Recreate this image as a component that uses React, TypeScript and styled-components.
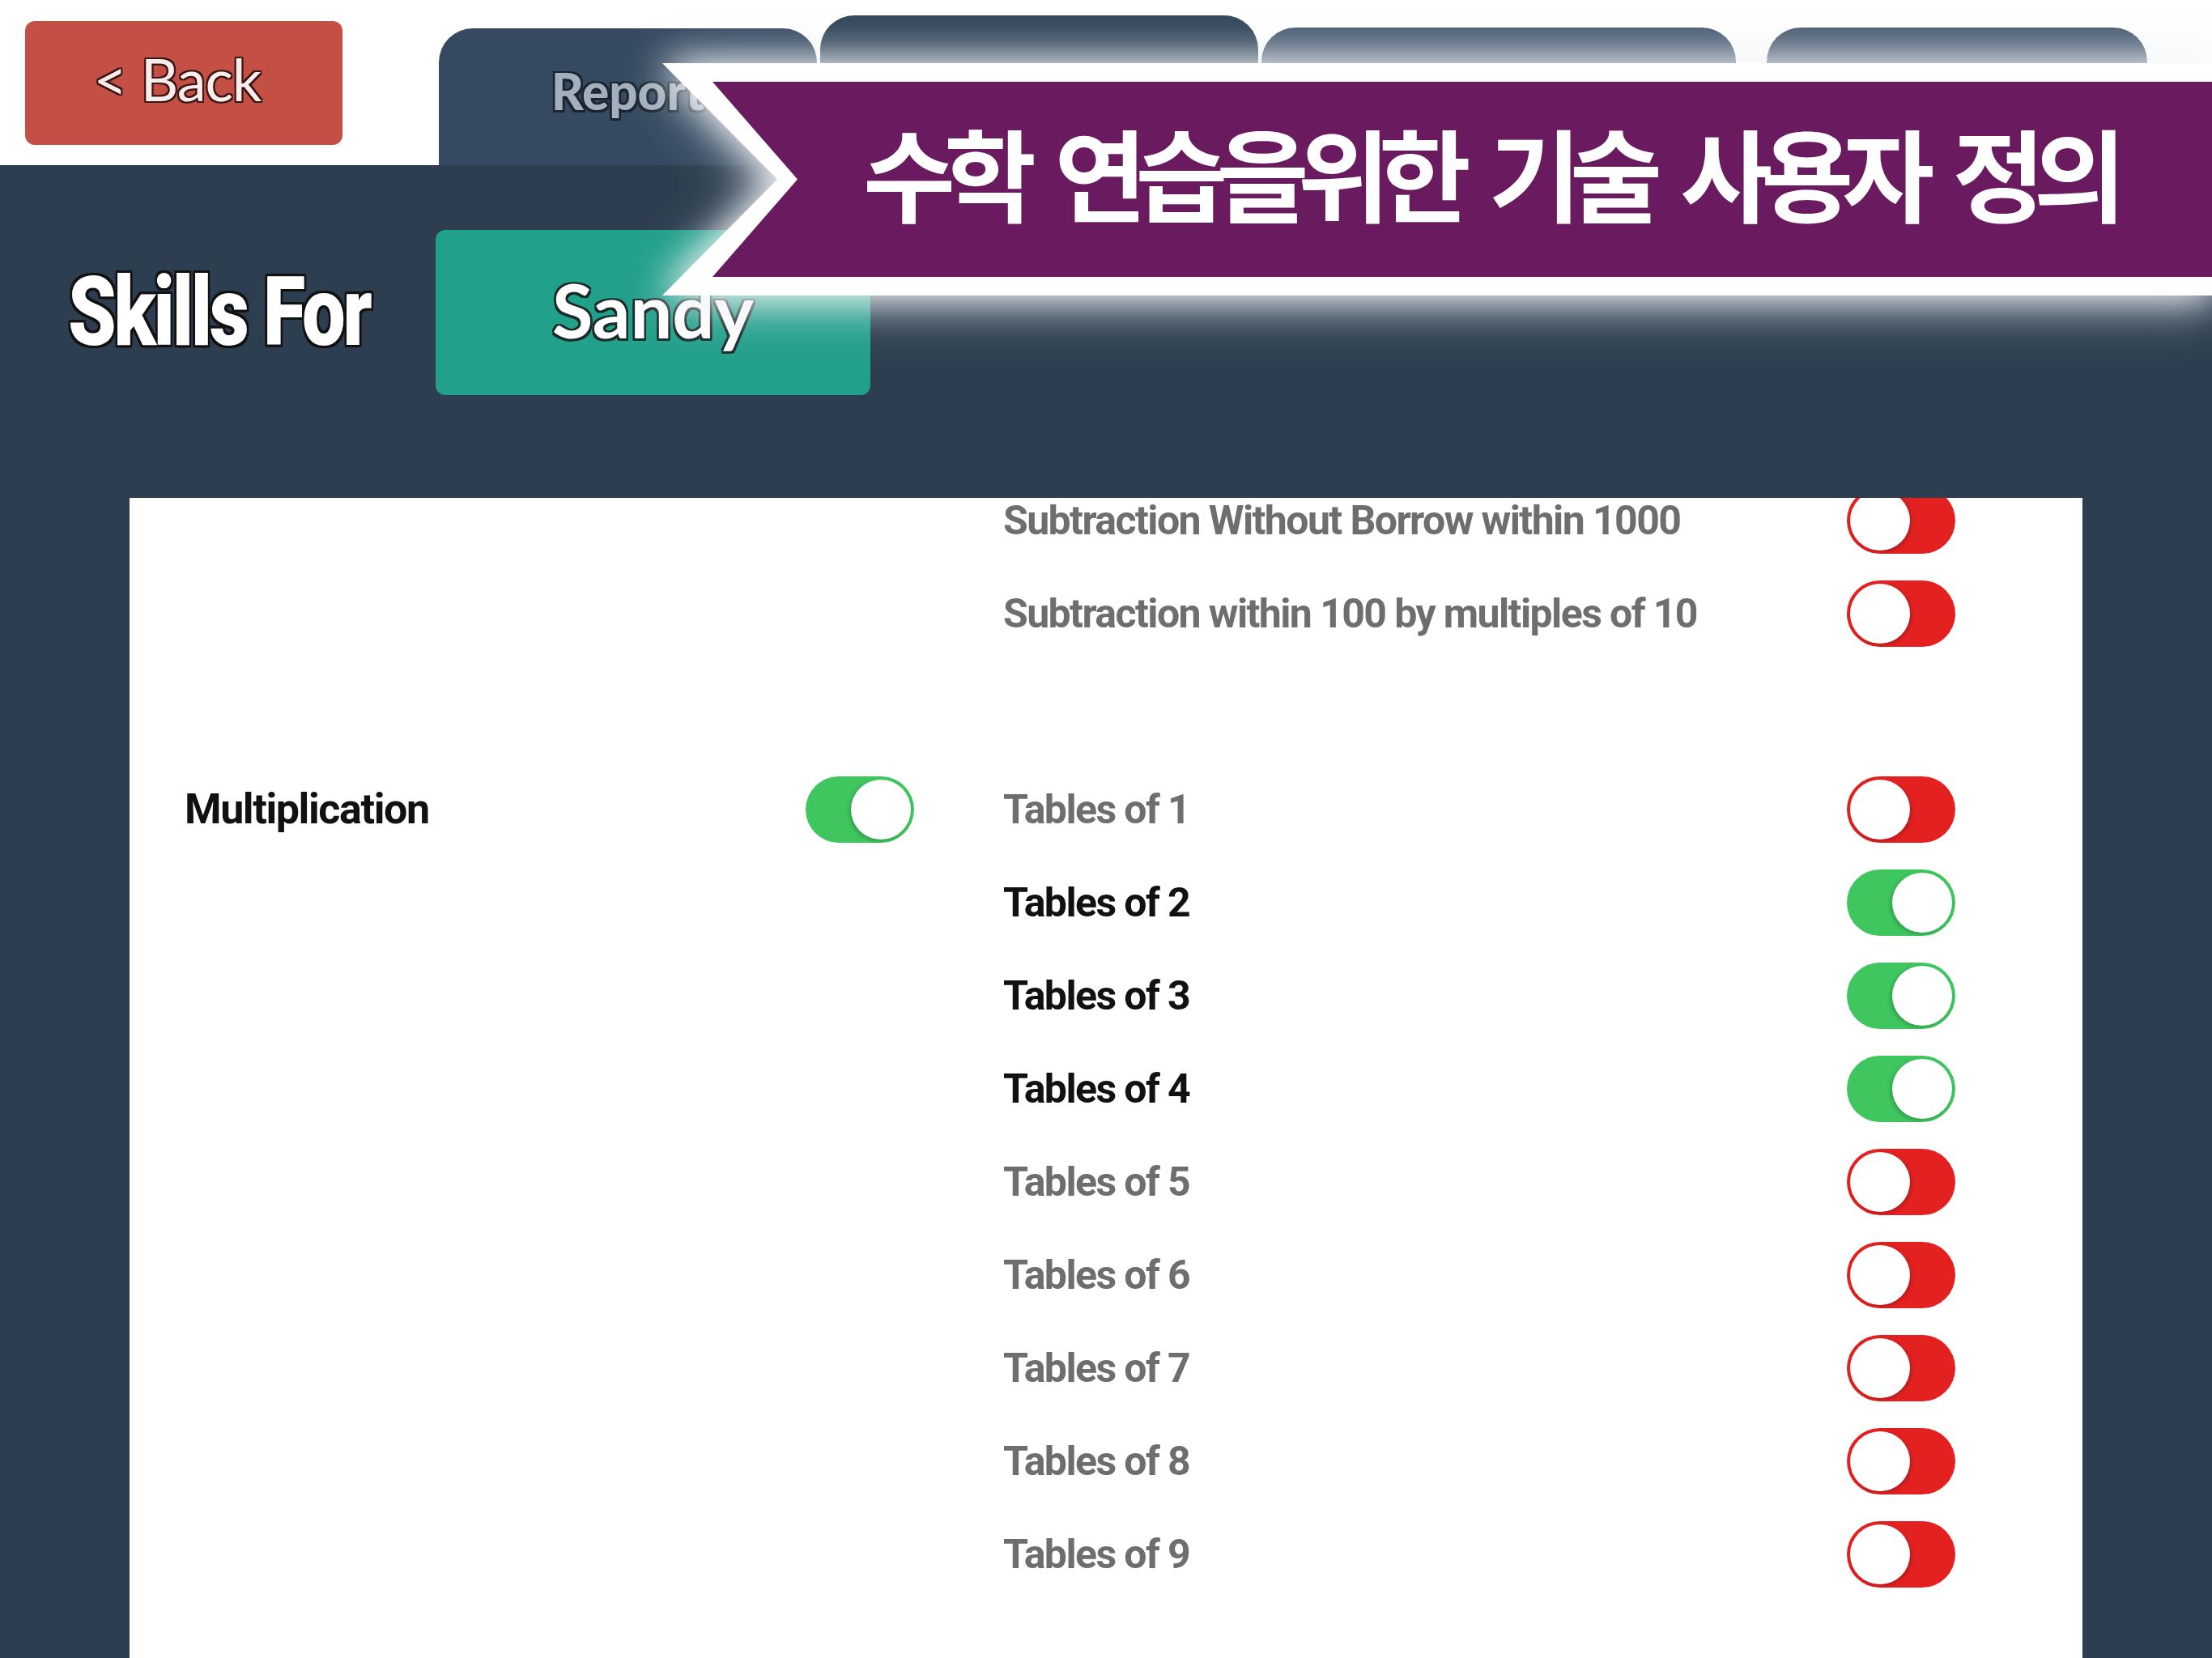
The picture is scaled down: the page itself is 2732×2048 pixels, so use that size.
import * as React from 'react';
import styled, { createGlobalStyle } from 'styled-components';

const GlobalStyle = createGlobalStyle`
  html, body {
    margin: 0;
    padding: 0;
    width: 2732px;
    height: 2048px;
    overflow: hidden;
    background: #2d3e50;
  }
  * {
    box-sizing: border-box;
  }
`

const outline = (w: number, c: string) => `
  text-shadow:
    ${-w}px ${-w}px 0 ${c}, ${w}px ${-w}px 0 ${c},
    ${-w}px ${w}px 0 ${c}, ${w}px ${w}px 0 ${c},
    0 ${w}px 0 ${c}, 0 ${-w}px 0 ${c},
    ${w}px 0 0 ${c}, ${-w}px 0 0 ${c};
`

const Page = styled.div`
  position: relative;
  width: 2732px;
  height: 2048px;
  display: flex;
  flex-direction: column;
  overflow: hidden;
`

const TopBar = styled.div`
  height: 204px;
  flex-shrink: 0;
  background: #ffffff;
  display: flex;
  align-items: flex-end;
  padding-left: 31px;
`

const BackButton = styled.button`
  align-self: flex-start;
  margin-top: 26px;
  width: 392px;
  height: 153px;
  border: none;
  border-radius: 12px;
  background: #c44f45;
  color: #f8ecec;
  font-family: Lato, 'Open Sans', sans-serif;
  font-size: 72px;
  font-weight: 400;
  letter-spacing: -1px;
  padding: 0 16px 12px 0;
  ${outline(2, '#3b1714')}
`

const Tabs = styled.div`
  display: flex;
  align-items: flex-end;
  gap: 4px;
  margin-left: 119px;
`

const Tab = styled.div<{ $w: number; $h: number; $bg: string; $gapBefore?: number }>`
  width: ${p => p.$w}px;
  height: ${p => p.$h}px;
  margin-left: ${p => p.$gapBefore || 0}px;
  background: ${p => p.$bg};
  border-radius: 42px 42px 0 0;
  display: flex;
  justify-content: center;
  padding-top: 40px;
  color: #a3b0bc;
  font-family: Lato, 'Open Sans', sans-serif;
  font-weight: 900;
  font-size: 62px;
  line-height: 1.2;
  ${outline(2.5, '#1a2430')}
`

const Main = styled.div`
  flex: 1;
  display: flex;
  flex-direction: column;
  background: #2d3e50;
  padding-top: 80px;
  min-height: 0;
`

const HeaderRow = styled.div`
  display: flex;
  align-items: center;
  padding-left: 84px;
  height: 204px;
  flex-shrink: 0;
`

const Heading = styled.h1`
  width: 454px;
  margin: 0;
  flex-shrink: 0;
  font-family: Roboto, 'Liberation Sans', sans-serif;
  font-weight: 900;
  font-size: 118px;
  letter-spacing: -4px;
  color: #ffffff;
  white-space: nowrap;
  ${outline(3, '#111')}

  span {
    display: inline-block;
    transform: scaleX(0.81);
    transform-origin: left center;
  }
`

const StudentButton = styled.button`
  width: 537px;
  height: 204px;
  border: none;
  border-radius: 12px;
  background: #21a08a;
  color: #ffffff;
  font-family: Lato, 'Open Sans', sans-serif;
  font-weight: 700;
  font-size: 92px;
  padding: 0 0 8px;
  ${outline(2.5, '#1b2b2a')}
`

const Card = styled.div`
  flex: 1;
  margin: 127px 160px 0;
  background: #ffffff;
  overflow: hidden;
  min-height: 0;
`

const List = styled.div<{ $scroll: number }>`
  margin-top: ${p => -p.$scroll}px;
  padding: 0 157px 0 68px;
  display: flex;
  flex-direction: column;
  gap: 127px;
`

const Section = styled.section`
  display: grid;
  grid-template-columns: 767px 136px 1fr;
  align-items: start;
`

const SectionLabel = styled.div`
  height: 115px;
  display: flex;
  align-items: center;
  font-family: Roboto, 'Liberation Sans', sans-serif;
  font-weight: 700;
  font-size: 52px;
  letter-spacing: -1.4px;
  color: #111111;
`

const SectionToggle = styled.div`
  height: 115px;
  display: flex;
  align-items: center;
`

const Skills = styled.div`
  margin-left: 108px;
  display: flex;
  flex-direction: column;
`

const SkillRow = styled.div`
  height: 115px;
  display: flex;
  align-items: center;
  justify-content: space-between;
`

const SkillName = styled.span<{ $on: boolean }>`
  font-family: Roboto, 'Liberation Sans', sans-serif;
  font-weight: 700;
  font-size: 50px;
  letter-spacing: -1.6px;
  color: ${p => (p.$on ? '#111111' : '#6e6e6e')};
  white-space: nowrap;
`

const Switch = styled.button<{ $on: boolean }>`
  width: 134px;
  height: 82px;
  flex-shrink: 0;
  border: none;
  border-radius: 41px;
  padding: 4px;
  background: ${p => (p.$on ? '#3fc65e' : '#e42121')};
  display: flex;
  justify-content: ${p => (p.$on ? 'flex-end' : 'flex-start')};
  cursor: pointer;
`

const Knob = styled.span<{ $on: boolean }>`
  width: 74px;
  height: 74px;
  border-radius: 50%;
  background: #ffffff;
  box-shadow: ${p => (p.$on ? '-2px 2px 5px' : '2px 2px 5px')} rgba(0, 0, 0, 0.22);
`

const BannerGlow = styled.div`
  position: absolute;
  left: 818px;
  right: 0;
  top: 78px;
  height: 287px;
  filter: drop-shadow(0 0 22px rgba(255, 255, 255, 0.85)) drop-shadow(0 6px 30px rgba(220, 225, 232, 0.7));
`

const BannerFrame = styled.div`
  height: 100%;
  background: #ffffff;
  clip-path: polygon(0 0, 100% 0, 100% 100%, 0 100%, 142px 50%);
  padding: 23px 0 23px 62px;
  display: flex;
`

const BannerBody = styled.div`
  flex: 1;
  background: #6a1a5f;
  clip-path: polygon(0 0, 100% 0, 100% 100%, 0 100%, 105px 50%);
  display: flex;
  align-items: center;
  padding: 0 0 22px 186px;
`

const BannerText = styled.h2`
  margin: 0;
  color: #ffffff;
  font-family: 'Noto Sans CJK KR', 'Noto Sans', sans-serif;
  font-weight: 700;
  font-size: 124px;
  letter-spacing: -14px;
  word-spacing: 22px;
  white-space: nowrap;
`

const Toggle: React.FC<{ on: boolean }> = ({ on }) => (
  <Switch $on={on} aria-pressed={on}>
    <Knob $on={on} />
  </Switch>
)

interface SkillGroup {
  name?: string;
  on?: boolean;
  skills: { name: string; on: boolean }[];
}

// the list is scrolled: the subtraction group's head is above the fold
const groups: SkillGroup[] = [
  {
    skills: [
      { name: 'Subtraction Without Borrow within 1000', on: false },
      { name: 'Subtraction within 100 by multiples of 10', on: false },
    ],
  },
  {
    name: 'Multiplication',
    on: true,
    skills: [1, 2, 3, 4, 5, 6, 7, 8, 9].map(n => ({
      name: `Tables of ${n}`,
      on: n >= 2 && n <= 4,
    })),
  },
]

export default function App() {
  return (
    <>
      <GlobalStyle />
      <Page>
        <TopBar>
          <BackButton>&lt; Back</BackButton>
          <Tabs>
            <Tab $w={467} $h={169} $bg="#354a60">Report</Tab>
            <Tab $w={541} $h={185} $bg="#33475a" />
            <Tab $w={586} $h={170} $bg="#4b5d73" />
            <Tab $w={470} $h={170} $bg="#4b5d73" $gapBefore={34} />
          </Tabs>
        </TopBar>
        <Main>
          <HeaderRow>
            <Heading><span>Skills For</span></Heading>
            <StudentButton>Sandy</StudentButton>
          </HeaderRow>
          <Card>
            <List $scroll={30}>
              {groups.map((g, i) => (
                <Section key={i}>
                  <SectionLabel>{g.name}</SectionLabel>
                  <SectionToggle>
                    {g.name && <Toggle on={!!g.on} />}
                  </SectionToggle>
                  <Skills>
                    {g.skills.map(s => (
                      <SkillRow key={s.name}>
                        <SkillName $on={s.on}>{s.name}</SkillName>
                        <Toggle on={s.on} />
                      </SkillRow>
                    ))}
                  </Skills>
                </Section>
              ))}
            </List>
          </Card>
        </Main>
        <BannerGlow>
          <BannerFrame>
            <BannerBody>
              <BannerText>수학 연습을위한 기술 사용자 정의</BannerText>
            </BannerBody>
          </BannerFrame>
        </BannerGlow>
      </Page>
    </>
  )
}
